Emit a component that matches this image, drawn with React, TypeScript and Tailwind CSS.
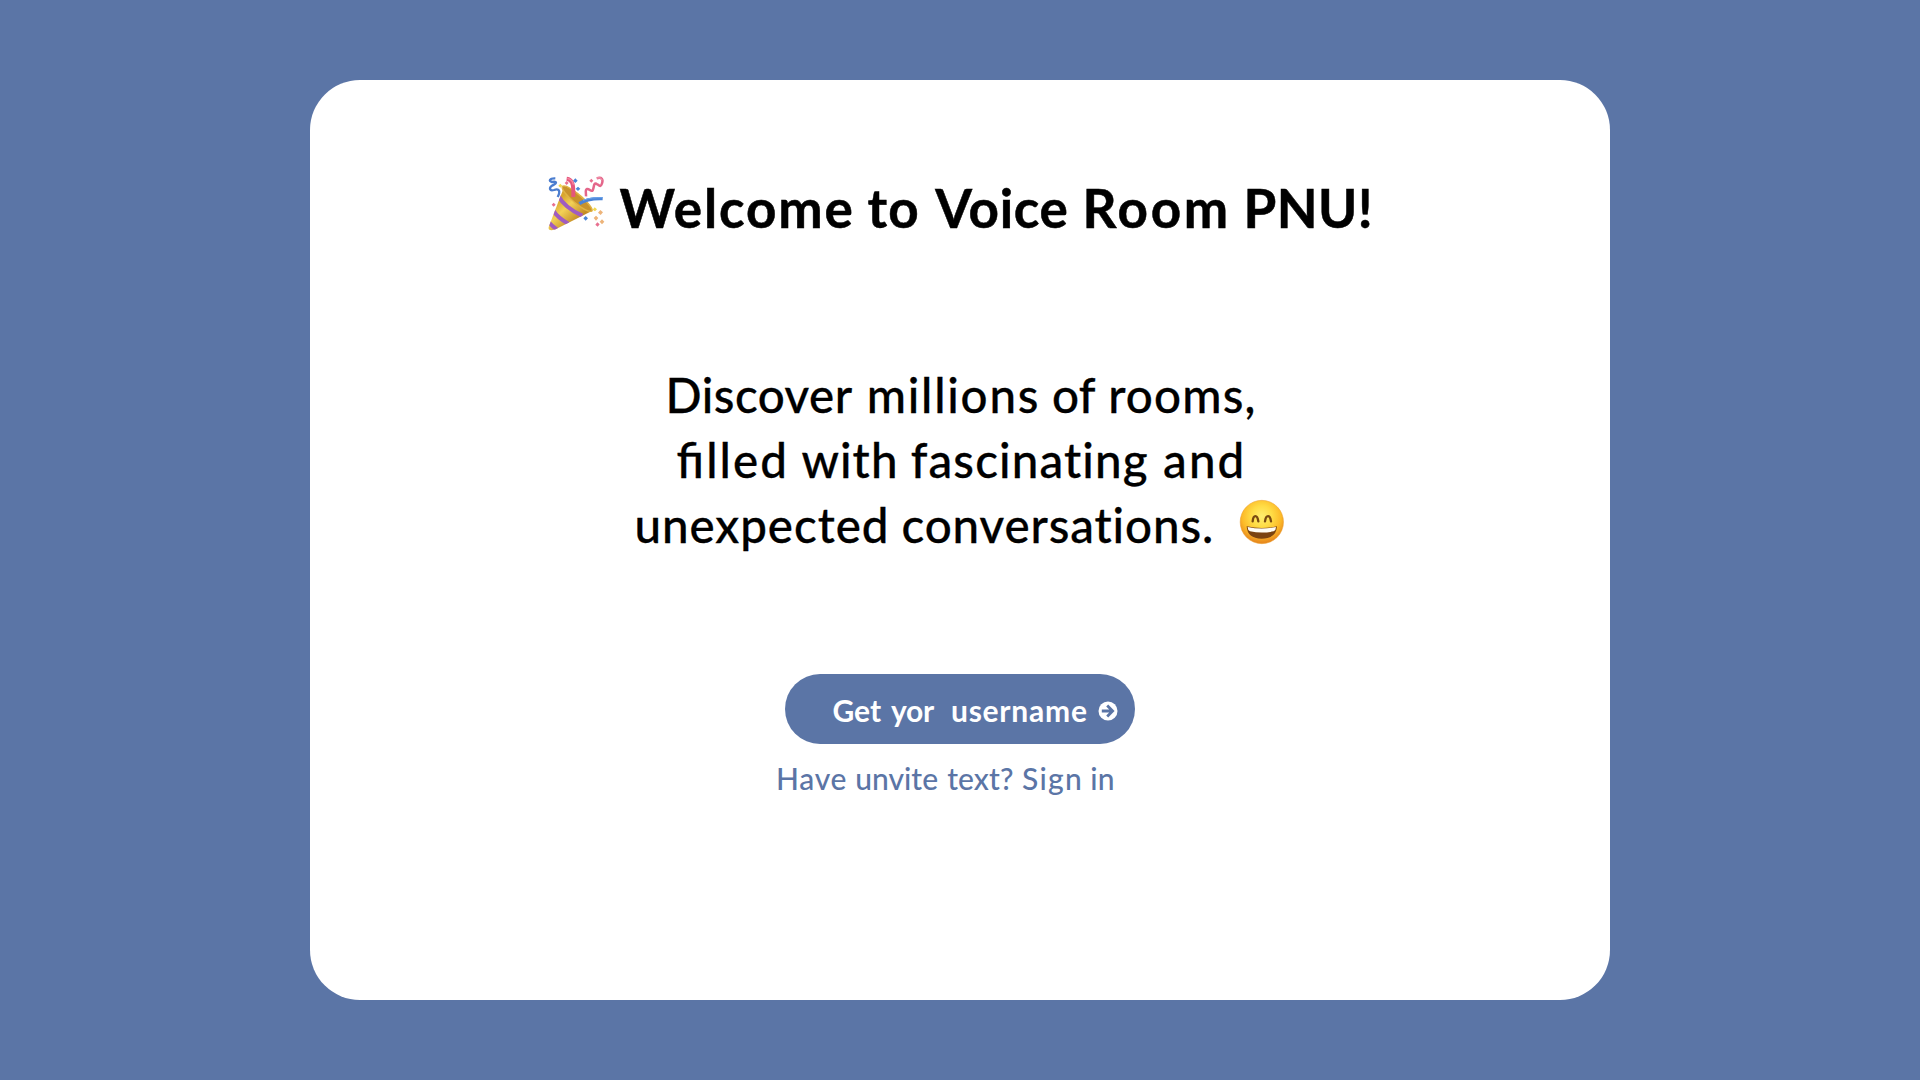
import React from "react";

function PartyPopper() {
  return (
    <svg className="h-[75px] w-[85px] shrink-0" viewBox="0 0 255 225" fill="none" aria-hidden="true">
      <defs>
        <linearGradient id="cone" x1="65" y1="110" x2="120" y2="170" gradientUnits="userSpaceOnUse">
          <stop offset="0" stopColor="#d9a52f" />
          <stop offset="0.4" stopColor="#f3d156" />
          <stop offset="1" stopColor="#c58d25" />
        </linearGradient>
        <clipPath id="coneClip">
          <path d="M88 64 L41 186 Q39 196 50 196 L62 193 L172 137 Q150 85 88 64Z" />
        </clipPath>
      </defs>
      <path d="M88 64 L41 186 Q39 196 50 196 L62 193 L172 137 Q150 85 88 64Z" fill="url(#cone)" />
      <g clipPath="url(#coneClip)" stroke="#a05cc0" strokeWidth="12">
        <path d="M70 92 Q88 128 142 152" />
        <path d="M54 136 Q68 158 100 176" />
        <path d="M40 170 Q50 182 66 194" />
      </g>
      <path d="M82 64 C98 54 178 124 171 138 C154 148 75 80 82 64Z" fill="#c8922c" stroke="#e0b344" strokeWidth="4" />
      <path d="M95 41 C111 43 116 54 115 96" stroke="#e5567c" strokeWidth="12" />
      <path d="M97 40 C109 43 114 48 115 59" stroke="#f78ba5" strokeWidth="4" />
      <path d="M133 116 C152 103 174 100 203 101" stroke="#4a83d6" strokeWidth="10" />
      <path d="M144 106 C164 98 180 98 202 98" stroke="#6ea7ee" strokeWidth="3" />
      <path d="M61 40 C43 39 40 49 51 51 C65 48 68 54 53 61 C40 69 44 79 57 75 C73 69 77 79 68 96" stroke="#4b7dcf" strokeWidth="7" />
      <path d="M185 40 C201 35 205 44 201 55 C197 68 193 62 184 56 C175 54 178 66 173 76 C168 82 163 70 156 72 C149 74 154 86 153 94" stroke="#e4668a" strokeWidth="7.500" />
      <path d="M186 39 C195 37 201 40 201 46" stroke="#f7a0b5" strokeWidth="3" />
      <g fill="#4a84d6">
        <path d="M121 40 l7 7 -7 7 -7 -7z M129 65 l7 6 -7 7 -7 -7z M152 153 l7 7 -7 7 -7 -7z" />
      </g>
      <g fill="#e8708f">
        <path d="M169 41 l6 6 -6 6 -6 -6z M95 48 l6 6 -6 6 -6 -6z M56 113 l6 6 -6 6 -6 -6z M187 172 l7 6 -6 7 -7 -6z" />
      </g>
      <g fill="#edb47a">
        <path d="M196 135 l8 7 -7 8 -8 -7z M183 152 l7 7 -7 8 -7 -8z M201 163 l7 7 -7 8 -7 -8z" />
      </g>
      <path d="M76 56 l6 6 -6 6 -6 -6z M179 127 l7 6 -6 6 -7 -5z" fill="#f2d84f" />
    </svg>
  );
}

function GrinningFace() {
  return (
    <svg className="-mt-px ml-[14.8px] h-[65px] w-[65px] shrink-0" viewBox="0 0 195 195" fill="none" aria-hidden="true">
      <defs>
        <radialGradient id="face" cx="98" cy="76" r="78" gradientUnits="userSpaceOnUse">
          <stop offset="0" stopColor="#ffee70" />
          <stop offset="0.4" stopColor="#ffdc45" />
          <stop offset="0.75" stopColor="#fcba28" />
          <stop offset="1" stopColor="#e88a1e" />
        </radialGradient>
      </defs>
      <circle cx="98.500" cy="93" r="65" fill="url(#face)" stroke="#eb9c2c" strokeWidth="1.500" />
      <path d="M71 91 C73 70 85 70 88 91 M108 91 C111 70 123 70 126 91" stroke="#7a4a10" strokeWidth="7" strokeLinecap="round" />
      <path d="M53 106 Q98 116 144 106 Q142 143 98 143 Q55 143 53 106Z" fill="#7b4310" />
      <path d="M56 108 Q98 117 141 108 Q141 118 134 121 Q98 128 63 121 Q56 118 56 108Z" fill="#fffdf5" />
    </svg>
  );
}

export default function App() {
  return (
    <div className="h-screen w-full overflow-hidden bg-[#5b75a6] pt-20 font-['Lato',sans-serif]">
      <main className="mx-auto flex h-[920px] w-[1300px] flex-col items-start rounded-[50px] bg-white pt-[85px]">
        <h1 className="ml-[225px] flex h-[75px] whitespace-nowrap text-[53px] leading-[64px] font-bold text-black [-webkit-text-stroke:0.5px_black]">
          <PartyPopper />
          <span className="mt-[11px] -ml-[0.5px] tracking-[1.85px]">Welcome</span>
          <span className="mt-[11px] ml-[12.9px] tracking-[1.3px]">to</span>
          <span className="mt-[11px] ml-[15.3px] tracking-[0.66px]">Voice</span>
          <span className="mt-[11px] ml-[14px] tracking-[2.7px]">Room</span>
          <span className="mt-[11px] ml-[12.6px] tracking-[0.43px]">PNU!</span>
        </h1>

        <div className="mt-[122px] whitespace-nowrap text-[47.5px] leading-[65px] font-medium text-black [-webkit-text-stroke:0.3px_black]">
          <p className="ml-[355.5px] flex">
            <span className="tracking-[0.51px]">Discover</span>
            <span className="ml-[14.1px] tracking-[1.76px]">millions</span>
            <span className="ml-[11.8px] tracking-[0.32px]">of</span>
            <span className="ml-[12.4px] tracking-[1.16px]">rooms,</span>
          </p>
          <p className="ml-[366.5px] flex">
            <span className="tracking-[2.1px] [font-feature-settings:'liga'_1]">filled</span>
            <span className="ml-[12.3px] tracking-[1.08px]">with</span>
            <span className="ml-[12.2px] tracking-[1.14px]">fascinating</span>
            <span className="ml-[14.4px] tracking-[2.1px]">and</span>
          </p>
          <p className="ml-[324.5px] flex h-[65px]">
            <span className="tracking-[0.95px]">unexpected</span>
            <span className="ml-[12.1px] tracking-[0.9px]">conversations.</span>
            <GrinningFace />
          </p>
        </div>

        <button className="mt-[117px] ml-[475px] flex h-[70px] w-[350px] items-center whitespace-nowrap rounded-full bg-[#5b75a6] pt-px pl-[47.500px] text-[30px] leading-9 font-bold text-white">
          <span>Get</span>
          <span className="ml-[9.8px] tracking-[-0.29px]">yor</span>
          <span className="ml-[17.1px] tracking-[0.77px]">username</span>
          <svg className="mt-[3px] ml-[10.3px] h-5 w-5 shrink-0" viewBox="0 0 20 20" fill="none" aria-hidden="true">
            <circle cx="10" cy="10" r="9.500" fill="white" />
            <path d="M3.800 10h10.500M9.200 4.600L14.600 10l-5.400 5.400" stroke="#5b75a6" strokeWidth="2.800" />
          </svg>
        </button>

        <a className="mt-4 ml-[466px] flex whitespace-nowrap text-[30px] leading-9 font-medium text-[#5b75a6]">
          <span className="tracking-[0.73px]">Have</span>
          <span className="ml-[8px] tracking-[0.03px]">unvite</span>
          <span className="ml-[9.1px] tracking-[0.1px]">text?</span>
          <span className="ml-[8.4px] tracking-[1.28px]">Sign</span>
          <span className="ml-[7.2px] tracking-[0.19px]">in</span>
        </a>
      </main>
    </div>
  );
}
